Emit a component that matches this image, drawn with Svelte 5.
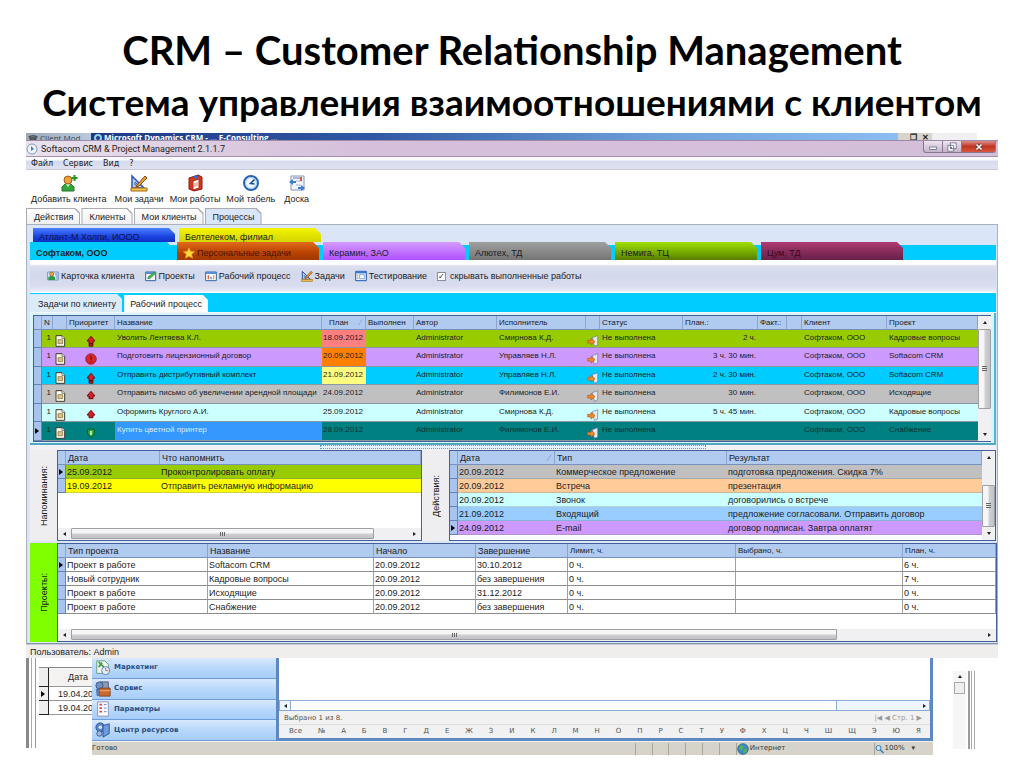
<script>
  const menu = ['Файл', 'Сервис', 'Вид', '?'];

  const tools = [
    { icon: 'user', label: 'Добавить клиента' },
    { icon: 'ruler', label: 'Мои задачи' },
    { icon: 'book', label: 'Мои работы' },
    { icon: 'clock', label: 'Мой табель' },
    { icon: 'board', label: 'Доска' }
  ];

  const pages = ['Действия', 'Клиенты', 'Мои клиенты', 'Процессы'];

  const backTabs = [
    { label: 'Атлант-М Холпи, ИООО', tone: 'blue' },
    { label: 'Белтелеком, филиал', tone: 'yellow' }
  ];
  const frontTabs = [
    { label: 'Софтаком, ООО', tone: 'cyan' },
    { label: 'Персональные задачи', tone: 'rust', star: true },
    { label: 'Керамин, ЗАО', tone: 'violet' },
    { label: 'Алютех, ТД', tone: 'gray' },
    { label: 'Немига, ТЦ', tone: 'green' },
    { label: 'Цум, ТД', tone: 'plum' }
  ];

  const actions = [
    { icon: 'card', label: 'Карточка клиента' },
    { icon: 'project', label: 'Проекты' },
    { icon: 'flow', label: 'Рабочий процесс' },
    { icon: 'ruler', label: 'Задачи' },
    { icon: 'test', label: 'Тестирование' }
  ];

  let hideDone = $state(true);

  const taskCols = [8, 11, 14, 48, 207, 44, 48, 83, 89, 14, 83, 75, 29, 15, 85, 91];
  const taskHead = ['', 'N', '', 'Приоритет', 'Название', 'План', 'Выполнен', 'Автор', 'Исполнитель', '', 'Статус', 'План.:', 'Факт.:', '', 'Клиент', 'Проект'];
  const tasks = [
    { color: '#99cc00', priority: 'up2', name: 'Уволить Лентяева К.Л.', date: '18.09.2012', dateColor: '#ff7f7f', who: 'Смирнова К.Д.', plan: '2 ч.', project: 'Кадровые вопросы' },
    { color: '#cc99ff', priority: 'stop', name: 'Подготовить лицензионный договор', date: '20.09.2012', dateColor: '#ff8000', who: 'Управляев Н.Л.', plan: '3 ч. 30 мин.', project: 'Softacom CRM' },
    { color: '#00ccff', priority: 'up2', name: 'Отправить дистрибутивный комплект', date: '21.09.2012', dateColor: '#ffff80', who: 'Управляев Н.Л.', plan: '2 ч. 30 мин.', project: 'Softacom CRM' },
    { color: '#c0c0c0', priority: 'up', name: 'Отправить письмо об увеличении арендной площади', date: '24.09.2012', who: 'Филимонов Е.И.', plan: '30 мин.', project: 'Исходящие' },
    { color: '#ccffff', priority: 'up', name: 'Оформить Круглого А.И.', date: '25.09.2012', who: 'Смирнова К.Д.', plan: '5 ч. 45 мин.', project: 'Кадровые вопросы' },
    { color: '#008080', priority: 'down', name: 'Купить цветной принтер', date: '28.09.2012', who: 'Филимонов Е.И.', plan: '', project: 'Снабжение', current: true }
  ];

  const reminders = {
    cols: [8, 94, 261],
    head: ['Дата', 'Что напомнить'],
    current: 0,
    rows: [
      { color: '#99cc00', cells: ['25.09.2012', 'Проконтролировать оплату'] },
      { color: '#ffff00', cells: ['19.09.2012', 'Отправить рекламную информацию'] }
    ]
  };
  const events = {
    cols: [8, 97, 172, 255],
    head: ['Дата', 'Тип', 'Результат'],
    sorted: 0,
    current: 4,
    rows: [
      { color: '#c0c0c0', cells: ['20.09.2012', 'Коммерческое предложение', 'подготовка предложения. Скидка 7%'] },
      { color: '#ffcc99', cells: ['20.09.2012', 'Встреча', 'презентация'] },
      { color: '#ccffff', cells: ['20.09.2012', 'Звонок', 'договорились о встрече'] },
      { color: '#99ccff', cells: ['21.09.2012', 'Входящий', 'предложение согласовали. Отправить договор'] },
      { color: '#cc99ff', cells: ['24.09.2012', 'E-mail', 'договор подписан. Завтра оплатят'] }
    ]
  };
  const projects = {
    cols: [8, 142, 166, 102, 92, 168, 167, 93],
    head: ['Тип проекта', 'Название', 'Начало', 'Завершение', 'Лимит, ч.', 'Выбрано, ч.', 'План, ч.'],
    small: 4,
    lined: true,
    current: 0,
    rows: [
      { cells: ['Проект в работе', 'Softacom CRM', '20.09.2012', '30.10.2012', '0 ч.', '', '6 ч.'] },
      { cells: ['Новый сотрудник', 'Кадровые вопросы', '20.09.2012', 'без завершения', '0 ч.', '', '7 ч.'] },
      { cells: ['Проект в работе', 'Исходящие', '20.09.2012', '31.12.2012', '0 ч.', '', '0 ч.'] },
      { cells: ['Проект в работе', 'Снабжение', '20.09.2012', 'без завершения', '0 ч.', '', '0 ч.'] }
    ]
  };

  const nav = [
    { icon: 'marketing', label: 'Маркетинг' },
    { icon: 'service', label: 'Сервис' },
    { icon: 'params', label: 'Параметры' },
    { icon: 'gears', label: 'Центр ресурсов' }
  ];
  const letters = ['Все', '№', ...'АБВГДЕЖЗИКЛМНОПРСТУФХЦЧШЩЭЮЯ'];
</script>

{#snippet icon(name)}
  <svg class="icon" viewBox="0 0 18 18" aria-hidden="true">
    {#if name === 'user'}
      <path d="M2 17v-4l3-3h6l3 3v4z" fill="#35a53a" stroke="#1c7a2a" />
      <path d="M6 10l2 3 2-3" fill="#e8f6d8" />
      <circle cx="8" cy="6" r="4" fill="#e8a33c" stroke="#9c5c14" />
      <path d="M14.500 1v6M11.500 4h6" stroke="#1e9a28" stroke-width="2" />
    {:else if name === 'ruler'}
      <path d="M2 2v12h12z" fill="#b9d4f5" stroke="#2c56b4" stroke-width="1.500" />
      <path d="M5 8v3h3z" fill="#fff" stroke="#2c56b4" />
      <path d="M7 11l8-9 2 2-8 8-3 1z" fill="#f0a028" stroke="#83461a" />
      <path d="M1 14h16v3H1z" fill="#f5c351" stroke="#a06a14" />
    {:else if name === 'book'}
      <path d="M3 4l9-3 4 2v12l-8 2-5-2z" fill="#d4361c" stroke="#8c1a10" />
      <path d="M7 7l6-2v9l-6 2z" fill="#fff" stroke="#b43020" />
      <path d="M8 9l4-1v4l-4 1z" fill="#f0b8a8" />
      <path d="M6 3l5-2v4z" fill="#346ad0" />
    {:else if name === 'clock'}
      <circle cx="9" cy="9" r="7" fill="#eef7ff" stroke="#2464b8" stroke-width="2" />
      <circle cx="9" cy="9" r="5.500" fill="none" stroke="#9cc8ee" />
      <path d="M12.500 5.500L8.500 9.500l4 .5" fill="none" stroke="#174c8a" stroke-width="1.500" />
    {:else if name === 'board'}
      <path d="M3 2h13v14H3z" fill="#f2f6ff" stroke="#8696b6" />
      <path d="M5 3h8v2H5z" fill="#a8b8d2" />
      <path d="M8 7h6M8 11h5" stroke="#a8b8d2" />
      <path d="M1 8l4-3v2h3v2H5v2zM17 14l-4 3v-2h-3v-2h3v-2z" fill="#3c7cd4" />
      <path d="M12 3h2v4h-2z" fill="#d85a44" />
    {:else if name === 'card'}
      <path d="M1 3h16v12H1z" fill="#dceafa" stroke="#4474a8" />
      <circle cx="7" cy="6" r="3" fill="#e9a94a" stroke="#85541a" />
      <path d="M2 15v-4l3-2h4l3 2v4z" fill="#2d9944" />
      <path d="M12 6h4M13 9h3M13 12h3" stroke="#2458a0" />
    {:else if name === 'project'}
      <path d="M1 3h15v13H1z" fill="#f8fcff" stroke="#3264a4" stroke-width="1.500" />
      <path d="M1 3h15v3H1z" fill="#5890d8" />
      <path d="M4 13l1-3 9-7 2 2-9 8z" fill="#53b54a" stroke="#284" />
    {:else if name === 'flow'}
      <path d="M1 3h16v13H1z" fill="#fff" stroke="#3264a4" stroke-width="1.500" />
      <path d="M1 3h16v3H1z" fill="#5890d8" />
      <path d="M4 8h2v6H4z" fill="#e05a3a" /><path d="M8 10h2v4H8z" fill="#3a8ad0" /><path d="M12 8h2v6h-2z" fill="#e8a030" />
    {:else if name === 'test'}
      <path d="M1 2h16v14H1z" fill="#e6f2ff" stroke="#2258b4" stroke-width="1.500" />
      <path d="M1 2h16v3H1z" fill="#3b78d2" />
      <path d="M7 7h7v6H7z" fill="#fff" stroke="#4c88cc" /><path d="M3 7h2v2H3zM3 11h2v2H3z" fill="#e8a030" />
    {:else if name === 'star'}
      <path d="M9 1l2.500 5.500 6 .5-4.500 4 1.500 6L9 14l-5.500 3 1.500-6L.500 7l6-.5z" fill="#ffd83a" stroke="#e89a10" />
    {:else if name === 'doc'}
      <path d="M3 1h9l4 4v12H3z" fill="#fffbe8" stroke="#3c3c34" stroke-width="1.500" />
      <path d="M6 7h7v6H6z" fill="#d9c48c" stroke="#7a6a34" /><path d="M12 1v4h4" fill="#fff" stroke="#3c3c34" />
    {:else if name === 'up' || name === 'up2'}
      <path d="M9 2l6 7h-3v4H6V9H3z" fill="#d81e28" stroke="#6b0c12" stroke-width="1.500" />
      {#if name === 'up2'}<path d="M6 13h6v4H6z" fill="#a81a20" stroke="#500" />{/if}
    {:else if name === 'down'}
      <path d="M9 16l-5-6V4l3-1h4l3 1v6z" fill="#2da83a" stroke="#0c5a24" stroke-width="1.500" /><path d="M8 6h2v6H8z" fill="#fff" />
    {:else if name === 'stop'}
      <circle cx="9" cy="9" r="8" fill="#d8262c" stroke="#8a1218" /><path d="M8 4h2v6H8zM8 12h2v2H8z" fill="#801016" />
    {:else if name === 'status'}
      <path d="M8 4l8-3v14l-5 2z" fill="#e4e8f2" stroke="#7078a0" />
      <path d="M1 8h5V5l6 5-6 5v-3H1z" fill="#f28a28" stroke="#b05a14" />
    {:else if name === 'marketing'}
      <path d="M2 1h9l4 4v10H2z" fill="#f3f8f2" stroke="#62907a" />
      <path d="M4 2l6 6M4 8l4-5" stroke="#46a04e" stroke-width="2" /><circle cx="12" cy="12" r="4.500" fill="#e2eefc" stroke="#5878a8" />
      <path d="M12 9v3h3" fill="none" stroke="#c8702c" />
    {:else if name === 'service'}
      <path d="M6 1h9v9H6z" fill="#8d9ab4" stroke="#4a5878" /><circle cx="5" cy="5" r="4" fill="#7090c4" stroke="#34568c" />
      <path d="M5 8h12v9H5z" fill="#c86a2e" stroke="#84401a" /><path d="M5 11h12" stroke="#f2b470" />
      <path d="M1 9h4v8H2z" fill="#6078a4" />
    {:else if name === 'params'}
      <path d="M3 1h12v16H3z" fill="#fdfdff" stroke="#8a8cb4" />
      <path d="M5 4h3M5 8h3M5 12h3" stroke="#d84850" stroke-width="2" /><path d="M10 4h3M10 8h3M10 12h3" stroke="#5c7cc4" />
    {:else if name === 'gears'}
      <circle cx="6" cy="6" r="5" fill="#5684c4" stroke="#294e8e" /><circle cx="6" cy="6" r="2" fill="#d6e6fa" />
      <path d="M9 4l7-2v11l-7 4z" fill="#6d9ae0" stroke="#2c4e94" /><circle cx="5" cy="13" r="3" fill="#9cb8e2" stroke="#34568c" />
    {:else if name === 'globe'}
      <circle cx="9" cy="9" r="8" fill="#3a8cc8" stroke="#1c5280" /><path d="M5 3l5 2-2 5-5 1zM10 10l5-2-1 6-4 2z" fill="#54b454" />
    {:else if name === 'lens'}
      <circle cx="7" cy="7" r="5" fill="#cfe6fb" stroke="#3878b8" stroke-width="2" /><path d="M11 11l6 6" stroke="#3878b8" stroke-width="3" />
    {/if}
  </svg>
{/snippet}

{#snippet hscroll(share, label)}
  <div class="hscroll">
    <button class="arrow left" aria-label="{label}: влево"></button>
    <div class="track"><div class="thumb" style="width: {share}%"><i></i></div></div>
    <button class="arrow right" aria-label="{label}: вправо"></button>
  </div>
{/snippet}

{#snippet vscroll(before, share, label)}
  <div class="vscroll">
    <button class="arrow up" aria-label="{label}: вверх"></button>
    <div style="flex: {before} 0 0"></div>
    <div class="thumb" style="flex: {share} 0 0"><i></i></div>
    <div style="flex: {100 - before - share} 0 0"></div>
    <button class="arrow down" aria-label="{label}: вниз"></button>
  </div>
{/snippet}

{#snippet grid(data)}
  <table class="grid" class:lined={data.lined}>
    <colgroup>
      {#each data.cols as width}<col style="width: {width}px" />{/each}
    </colgroup>
    <thead>
      <tr>
        <th></th>
        {#each data.head as title, i}
          <th class:small={data.small && i >= data.small}>{title}{#if data.sorted === i}<span class="sort">∕</span>{/if}</th>
        {/each}
      </tr>
    </thead>
    <tbody>
      {#each data.rows as row, i}
        <tr style={row.color ? `background: ${row.color}` : null}>
          <td class="mark">{#if data.current === i}<i class="pointer"></i>{/if}</td>
          {#each row.cells as cell}<td>{cell}</td>{/each}
        </tr>
      {/each}
    </tbody>
  </table>
{/snippet}

<main class="slide">
  <h1>
    <span class="latin">CRM – Customer Relationship Management</span>
    <span class="cyrillic">Система управления взаимоотношениями с клиентом</span>
  </h1>

  <div class="stage">
    <div class="behind-top">
      <div class="behind-client">☎ Client Mod...</div>
      <div class="behind-crm"><i class="ie"></i>Microsoft Dynamics CRM - ... E-Consulting ...</div>
      <div class="behind-buttons"><span>_</span><span>❐</span><span>✕</span></div>
      <div class="behind-rest"></div>
    </div>

    <section class="window">
      <header class="titlebar">
        <svg class="logo" viewBox="0 0 12 12" aria-hidden="true">
          <circle cx="6" cy="6" r="5" fill="#eef5fc" stroke="#8099c0" />
          <path d="M5 3v5l3-2z" fill="#5078b4" />
        </svg>
        <span class="caption">Softacom CRM &amp; Project Management 2.1.1.7</span>
        <div class="controls">
          <button aria-label="Свернуть">
            <svg viewBox="0 0 12 12"><rect x="2" y="6" width="8" height="3" fill="#fff" stroke="#666a88" /></svg>
          </button>
          <button aria-label="Развернуть">
            <svg viewBox="0 0 12 12"><path d="M4 1h7v7H4zM1 4h7v7H1z" fill="#fff" stroke="#666a88" /><path d="M4 6h2v2H4z" fill="#666a88" /></svg>
          </button>
          <button class="close" aria-label="Закрыть">
            <svg viewBox="0 0 12 12"><path d="M3 3l6 6M9 3l-6 6" stroke="#733" stroke-width="4" /><path d="M3 3l6 6M9 3l-6 6" stroke="#fff" stroke-width="2" /></svg>
          </button>
        </div>
      </header>

      <nav class="menu">
        {#each menu as item}<button>{item}</button>{/each}
      </nav>

      <div class="toolbar">
        {#each tools as tool}
          <button>{@render icon(tool.icon)}<span>{tool.label}</span></button>
        {/each}
      </div>

      <div class="pages">
        {#each pages as page}
          <button class:active={page === 'Процессы'}><span>{page}</span></button>
        {/each}
      </div>

      <div class="workspace">
        <div class="clients back">
          {#each backTabs as tab}<button class={tab.tone}>{tab.label}</button>{/each}
        </div>
        <div class="clients front">
          {#each frontTabs as tab}
            <button class={tab.tone}>{#if tab.star}{@render icon('star')}{/if}{tab.label}</button>
          {/each}
        </div>

        <div class="actions">
          {#each actions as action}
            <button>{@render icon(action.icon)}{action.label}</button>
          {/each}
          <label><input type="checkbox" bind:checked={hideDone} />скрывать выполненные работы</label>
        </div>

        <div class="views">
          <button class="active">Задачи по клиенту</button>
          <button>Рабочий процесс</button>
        </div>

        <div class="tasks-frame">
          <div class="tasks-box">
            <table class="tasks">
              <colgroup>
                {#each taskCols as width}<col style="width: {width}px" />{/each}
              </colgroup>
              <thead>
                <tr>
                  {#each taskHead as title, i}
                    <th class:date={i === 5}>{title}{#if i === 5}<span class="sort">∕</span>{/if}</th>
                  {/each}
                </tr>
              </thead>
              <tbody>
                {#each tasks as task}
                  <tr class:current={task.current} style="background: {task.color}">
                    <td class="mark">{#if task.current}<i class="pointer"></i>{/if}</td>
                    <td class="num">1</td>
                    <td class="pic">{@render icon('doc')}</td>
                    <td class="pic center">{@render icon(task.priority)}</td>
                    <td class="name">{task.name}</td>
                    <td class="when" style={task.dateColor ? `background: ${task.dateColor}` : null}>{task.date}</td>
                    <td></td>
                    <td>Administrator</td>
                    <td>{task.who}</td>
                    <td class="pic">{@render icon('status')}</td>
                    <td>Не выполнена</td>
                    <td class="num">{task.plan}</td>
                    <td></td>
                    <td></td>
                    <td>Софтаком, ООО</td>
                    <td>{task.project}</td>
                  </tr>
                {/each}
              </tbody>
            </table>
            {@render vscroll(0, 80, 'Задачи')}
          </div>
        </div>

        <div class="splitter"><i></i></div>

        <div class="lower">
          <div class="side"><span>Напоминания:</span></div>
          <div class="box reminders">
            {@render grid(reminders)}
            {@render hscroll(90, 'Напоминания')}
          </div>
          <div class="side"><span>Действия:</span></div>
          <div class="box events">
            <div class="fill">{@render grid(events)}</div>
            {@render vscroll(35, 65, 'Действия')}
          </div>
        </div>

        <div class="lower">
          <div class="side lime"><span>Проекты:</span></div>
          <div class="box projects">
            {@render grid(projects)}
            {@render hscroll(84, 'Проекты')}
          </div>
        </div>
      </div>

      <footer class="status">Пользователь: Admin</footer>
    </section>

    <div class="behind-bottom">
      <div class="old-client">
        <table>
          <thead><tr><th></th><th>Дата</th></tr></thead>
          <tbody>
            <tr><td><i class="pointer"></i></td><td>19.04.2012</td></tr>
            <tr><td></td><td>19.04.2012</td></tr>
          </tbody>
        </table>
      </div>

      <div class="msd">
        <div class="msd-body">
          <nav class="msd-nav">
            {#each nav as item}<a href="#top">{@render icon(item.icon)}{item.label}</a>{/each}
          </nav>
          <div class="msd-list">
            <div class="msd-blank"></div>
            <div class="msd-scroll">
              <button class="arrow left" aria-label="Список: влево"></button>
              <div class="msd-track"><div></div></div>
              <button class="arrow right" aria-label="Список: вправо"></button>
            </div>
            <div class="msd-info"><span>Выбрано 1 из 8.</span><span class="pager">|◀ ◀ Стр. 1 ▶</span></div>
            <div class="letters">
              {#each letters as letter}<a href="#top">{letter}</a>{/each}
            </div>
          </div>
        </div>
        <div class="msd-status">
          <span class="ready">Готово</span>
          <i></i><i></i><i></i><i></i><i></i><i></i>
          <span class="zone">{@render icon('globe')}Интернет</span>
          <span class="zoom">{@render icon('lens')}100%<b>▾</b></span>
        </div>
      </div>

      <div class="old-scroll">
        <button class="arrow up" aria-label="Старое окно: вверх"></button>
        <div class="knob"></div>
      </div>
      <div class="old-edge"></div>
    </div>
  </div>
</main>

<style>
  :global(body) {
    margin: 0;
    background: #fff;
  }

  .slide, .slide * {
    box-sizing: border-box;
  }

  .slide {
    padding-top: 25px;
    overflow: hidden;
    color: #1c1c24;
    font: 9px/12px "Liberation Sans", Arial, sans-serif;
  }

  h1 {
    margin: 0 0 6px;
    color: #000;
    font: 700 40px/51px Lato, "Open Sans", sans-serif;
    text-align: center;
    white-space: nowrap;
  }

  h1 span {
    display: block;
  }

  h1 .cyrillic {
    font-size: 37px;
  }

  button {
    margin: 0;
    padding: 0;
    border: 0;
    background: none;
    color: inherit;
    font: inherit;
    white-space: nowrap;
  }

  .stage {
    margin: 0 26px;
  }

  .icon {
    display: block;
    flex: none;
    width: 12px;
    height: 12px;
  }

  /* strip of the windows that lie behind */
  .behind-top {
    display: flex;
    height: 7px;
    overflow: hidden;
    font: 700 8px/10px "Open Sans", sans-serif;
    white-space: nowrap;
  }

  .behind-client {
    flex: 0 0 65px;
    padding-left: 2px;
    background: linear-gradient(90deg, #9aa8ba, #b9cade);
    color: #444;
    font-weight: 400;
  }

  .behind-crm {
    display: flex;
    flex: 1;
    gap: 2px;
    padding-left: 3px;
    background: linear-gradient(90deg, #1e3a86, #2f58a4 35%, #6ea0da 70%, #8cbcf2);
    color: #fff;
  }

  .ie {
    width: 8px;
    height: 8px;
    margin-top: 1px;
    border: 2px solid #8fd0e8;
    border-radius: 50%;
  }

  .behind-buttons {
    display: flex;
    flex: 0 0 34px;
    justify-content: space-around;
    background: #d8d4cc;
    color: #222;
    line-height: 7px;
  }

  .behind-rest {
    flex: 0 0 66px;
    background: linear-gradient(90deg, #f0f0f2 45px, #fff 45px);
  }

  /* main window */
  .titlebar {
    display: flex;
    align-items: center;
    height: 17px;
    border-top: 1px solid #9c8aa8;
    border-bottom: 1px solid #a294b0;
    background: linear-gradient(90deg, #e8e2ee, #dccbe0 20%, #d6bfdb 35%, #d4bfd9);
  }

  .logo {
    width: 12px;
    height: 12px;
  }

  .caption {
    flex: 1;
    margin-left: 3px;
    font: 9px/14px Roboto, "Open Sans", sans-serif;
  }

  .controls {
    display: flex;
    align-self: flex-start;
    height: 12px;
    margin-right: 2px;
    border: 1px solid #85788e;
    border-top: 0;
    border-radius: 0 0 3px 3px;
    background: linear-gradient(#eee4f0, #c4b4ca);
    overflow: hidden;
  }

  .controls button {
    width: 19px;
    border-right: 1px solid #85788e;
  }

  .controls .close {
    width: 33px;
    border: 0;
    background: linear-gradient(#dc9088, #c03424 50%, #d8583c);
  }

  .controls svg {
    display: block;
    width: 10px;
    height: 10px;
    margin: 0 auto;
  }

  .menu {
    display: flex;
    gap: 10px;
    height: 13px;
    padding-left: 5px;
    border-bottom: 1px solid #c8cad8;
    background: linear-gradient(#fafafd 3px, #d6daec 4px, #e0e2f2);
  }

  .menu button {
    padding-top: 1px;
    font: 8px/11px "DejaVu Sans", Verdana, sans-serif;
  }

  .toolbar {
    display: flex;
    gap: 6px;
    padding: 4px 5px 3px;
  }

  .toolbar button {
    display: flex;
    flex-direction: column;
    align-items: center;
    gap: 1px;
  }

  .toolbar .icon {
    width: 18px;
    height: 18px;
  }

  .toolbar button:first-child {
    margin-right: 2px;
  }

  .toolbar button:last-child {
    margin-left: 3px;
  }

  .pages {
    display: flex;
    gap: 1px;
    height: 16px;
    font-size: 9px;
  }

  .pages button {
    padding: 1px 1px 0;
    background: #a9abb0;
    clip-path: polygon(0 0, calc(100% - 5px) 0, 100% 5px, 100% 100%, 0 100%);
  }

  .pages span {
    display: block;
    padding: 2px 6px 0 7px;
    background: linear-gradient(#fff, #f0f0f2);
    line-height: 13px;
    clip-path: polygon(0 0, calc(100% - 5px) 0, 100% 5px, 100% 100%, 0 100%);
  }

  .pages .active span {
    background: #d9e5f8;
  }

  .workspace {
    padding: 3px 1px 1px 3px;
    border: 1px solid #a9b2bc;
    border-bottom-color: #8a94a8;
    background: #dae5f7;
  }

  .clients {
    display: flex;
    gap: 4px;
  }

  .clients button {
    display: flex;
    flex: 0 1 142px;
    align-items: center;
    gap: 2px;
    height: 18px;
    padding: 3px 6px 0;
    overflow: hidden;
    clip-path: polygon(0 0, calc(100% - 6px) 0, 100% 6px, 100% 100%, 0 100%);
  }

  .clients.back {
    padding-left: 3px;
  }

  .clients.back button {
    height: 14px;
    padding-top: 4px;
  }

  .clients.front {
    background: linear-gradient(transparent 3px, #00ccff 3px);
  }

  .clients .blue { background: linear-gradient(#4a80ff, #1c44e0 60%, #1030c8); color: #0b1450; }
  .clients .yellow { background: linear-gradient(#f4f400, #d4d400); }
  .clients .cyan { flex-basis: 143px; background: #00ccff; font-weight: 700; }
  .clients .rust { background: linear-gradient(#e06a1a, #b84200 60%, #a03800); color: #4a1400; }
  .clients .violet { background: linear-gradient(#d49cff, #b050ff); }
  .clients .gray { background: linear-gradient(#a0a0a0, #747474); }
  .clients .green { background: linear-gradient(#a0e000, #6c9c00 70%, #587c00); }
  .clients .plum { background: linear-gradient(#b03c74, #8a2c5a 50%, #66204a); color: #3c0824; }

  .actions {
    display: flex;
    align-items: center;
    gap: 10px;
    height: 33px;
    padding: 0 17px;
    border-bottom: 1px solid #fff;
    background: linear-gradient(#fff 4px, #dcdff0 6px, #d3d8eb 14px, #d8dcee 26px, #eceffa);
  }

  .actions button, .actions label {
    display: flex;
    align-items: center;
    gap: 2px;
    white-space: nowrap;
  }

  .actions input {
    appearance: none;
    width: 9px;
    height: 9px;
    margin: 0 2px 0 0;
    border: 1px solid #8c8f98;
    background: #fff;
  }

  .actions input:checked::before {
    content: "✓";
    display: block;
    color: #222;
    font: 700 8px/8px "DejaVu Sans", sans-serif;
  }

  .views {
    display: flex;
    gap: 2px;
    align-items: flex-end;
    height: 20px;
    border-bottom: 1px solid #eef8ff;
    background: #00ccff;
  }

  .views button {
    height: 17px;
    padding: 1px 6px 0;
    background: #fff;
    clip-path: polygon(0 0, calc(100% - 5px) 0, 100% 5px, 100% 100%, 0 100%);
  }

  .views .active {
    height: 18px;
    padding-left: 8px;
    background: #dcebfa;
  }

  .tasks-frame {
    padding: 2px 3px 1px;
    border-right: 2px solid #50b4d4;
    border-bottom: 2px solid #50a8c0;
    background: #d8f4fc;
  }

  .tasks-box, .box {
    display: flex;
    border: 1px solid #44609c;
    background: #fff;
  }

  table {
    border-collapse: separate;
    border-spacing: 0;
    table-layout: fixed;
  }

  th, td {
    padding: 0;
    overflow: hidden;
    font-weight: 400;
    text-align: left;
    white-space: nowrap;
  }

  .tasks {
    flex: 1;
    width: 100%;
    font-size: 8px;
    line-height: 10px;
  }

  .tasks th {
    height: 14px;
    padding-left: 2px;
    border-right: 1px solid #8ca4cc;
    border-bottom: 1px solid #7890bc;
    background: #b0caf0;
  }

  .tasks th.date {
    padding-left: 7px;
  }

  .sort {
    float: right;
    padding-right: 4px;
    color: #6c98d8;
  }

  .tasks td {
    height: 18px;
    padding: 3px 2px 0;
    border-bottom: 1px solid #8c98a0;
    vertical-align: top;
  }

  .tasks tr:nth-child(even) td {
    height: 19px;
  }

  .tasks .current {
    color: #06302f;
  }

  .tasks .current .name {
    background: #3399ff;
    color: #d8ecff;
  }

  .tasks td.num {
    text-align: right;
  }

  .tasks td.when {
    padding: 3px 0 0 1px;
  }

  .tasks td.pic {
    padding: 5px 1px 0;
  }

  .pic.center .icon {
    margin: 0 auto;
  }

  .tasks td.mark, .grid td.mark {
    padding: 0 1px;
    border-right: 1px solid #6484b8;
    border-bottom: 1px solid #6484b8;
    background: #a8c4ee;
    vertical-align: middle;
  }

  .pointer {
    display: block;
    width: 0;
    height: 0;
    border: 3px solid transparent;
    border-left: 4px solid #000;
    border-right: 0;
  }

  .splitter {
    display: flex;
    justify-content: center;
    height: 5px;
    background: #f2f2f4;
  }

  .splitter i {
    width: 40%;
    height: 4px;
    border: 1px dotted #58a0d0;
    background: #e4f4ff;
  }

  .lower {
    display: flex;
    background: #eeeef0;
  }

  .lower + .lower {
    margin-top: 2px;
  }

  .side {
    display: flex;
    flex: 0 0 27px;
    align-items: center;
    justify-content: center;
  }

  .side span {
    writing-mode: vertical-rl;
    transform: rotate(180deg);
  }

  .lime {
    background: #80ff00;
  }

  .reminders {
    flex: 364 0 0;
    flex-direction: column;
    justify-content: space-between;
  }

  .events {
    flex: 546 0 0;
    height: 91px;
  }

  .fill {
    flex: 1;
  }

  .projects {
    flex: 1;
    flex-direction: column;
    gap: 15px;
  }

  .grid {
    width: 100%;
    line-height: 12px;
  }

  .grid th {
    height: 14px;
    padding-left: 2px;
    border-right: 1px solid #8ca4cc;
    border-bottom: 1px solid #7890bc;
    background: #b0caf0;
  }

  .grid th.small {
    font-size: 8px;
  }

  .grid td {
    height: 14px;
    padding-left: 1px;
    border-bottom: 1px solid rgba(120, 130, 140, 0.35);
  }

  .lined td {
    border-right: 1px solid #a0a0a0;
    border-bottom: 1px solid #8c8c8c;
  }

  /* scroll bars */
  .hscroll {
    display: flex;
    height: 12px;
    background: #f0f0f2;
  }

  .track {
    flex: 1;
  }

  .thumb {
    display: flex;
    align-items: center;
    justify-content: center;
    border: 1px solid #a0a0a4;
    border-radius: 1px;
  }

  .hscroll .thumb {
    height: 11px;
    background: linear-gradient(#f6f6f6 45%, #d0d0d4 55%, #c2c2c6);
  }

  .hscroll .thumb i {
    width: 5px;
    height: 4px;
    background: repeating-linear-gradient(90deg, #666 0 1px, transparent 1px 2px);
  }

  .vscroll {
    display: flex;
    flex: 0 0 13px;
    flex-direction: column;
    background: #f0f0f2;
  }

  .vscroll .thumb {
    background: linear-gradient(90deg, #f6f6f6 45%, #d0d0d4 55%, #c2c2c6);
  }

  .vscroll .thumb i {
    width: 5px;
    height: 6px;
    background: repeating-linear-gradient(#666 0 1px, transparent 1px 2px);
  }

  .arrow {
    display: flex;
    flex: 0 0 13px;
    align-items: center;
    justify-content: center;
  }

  .arrow::before {
    content: "";
    border: 2px solid transparent;
  }

  .arrow.left::before { border-right: 3px solid #222; border-left: 0; }
  .arrow.right::before { border-left: 3px solid #222; border-right: 0; }
  .arrow.up::before { border-bottom: 3px solid #222; border-top: 0; }
  .arrow.down::before { border-top: 3px solid #222; border-bottom: 0; }

  .status {
    height: 14px;
    padding: 1px 4px 0;
    border-top: 1px solid #c8ccd4;
    background: #f0eeec;
  }

  /* windows below */
  .behind-bottom {
    display: flex;
    align-items: flex-start;
  }

  .old-client {
    flex: 0 0 66px;
    height: 90px;
    padding: 9px 0 0 13px;
    overflow: hidden;
    background: linear-gradient(90deg, #888 3px, #fff 3px 5px, #aaa 5px 6px, #fff 6px 9px, #999 9px 10px, transparent 10px);
  }

  .old-client table {
    width: 68px;
    border-top: 1px solid #888;
    background: #fff;
  }

  .old-client th, .old-client td {
    height: 14px;
    border-bottom: 1px solid #999;
  }

  .old-client th {
    height: 19px;
    background: #f4f3f1;
    text-align: center;
  }

  .old-client td {
    padding-left: 9px;
  }

  .old-client th:first-child, .old-client td:first-child {
    width: 10px;
    padding-left: 2px;
    border-right: 1px solid #222;
    border-bottom-color: #222;
    background: #f0eeec;
  }

  .msd {
    flex: 1;
    font: 7px/11px "DejaVu Sans", Verdana, sans-serif;
  }

  .msd-body {
    display: flex;
    height: 83px;
    border-right: 3px solid #5c88c4;
  }

  .msd-nav {
    display: flex;
    flex: 0 0 187px;
    flex-direction: column;
    border-right: 3px solid #5c88c4;
  }

  .msd-nav a {
    display: flex;
    flex: 1;
    align-items: center;
    gap: 3px;
    padding-left: 3px;
    border-bottom: 1px solid #6f9cd8;
    background: linear-gradient(#d8e9fd, #b9d8fb 50%, #a6cdfa);
    color: #294e82;
    font-weight: 700;
    text-decoration: none;
  }

  .msd-nav .icon {
    width: 16px;
    height: 16px;
  }

  .msd-list {
    display: flex;
    flex: 1;
    flex-direction: column;
    border-bottom: 3px solid #5c88c4;
    background: #f1f1f1;
    color: #555;
  }

  .msd-blank {
    flex: 1;
    background: #fff;
  }

  .msd-scroll {
    display: flex;
    height: 11px;
    border: 1px solid #8cacd8;
    background: #eef5ff;
  }

  .msd-scroll .arrow {
    flex-basis: 10px;
  }

  .msd-track {
    flex: 1;
  }

  .msd-track div {
    width: 87%;
    height: 9px;
    border: 1px solid #8cacd8;
    border-width: 0 1px;
    background: #fff;
  }

  .msd-info {
    display: flex;
    justify-content: space-between;
    height: 14px;
    padding: 2px 8px 0 5px;
    border-bottom: 1px solid #ddd;
  }

  .pager {
    color: #999;
  }

  .letters {
    display: flex;
    justify-content: space-between;
    height: 13px;
    padding: 1px 9px 0 10px;
  }

  .letters a {
    color: #555;
    text-decoration: none;
  }

  .msd-status {
    display: flex;
    align-items: center;
    height: 14px;
    border-top: 1px solid #f4f2ee;
    background: #d6d3ca;
    color: #333;
  }

  .ready {
    flex: 548 0 0;
  }

  .msd-status i {
    flex: 16 0 0;
    height: 12px;
    border-left: 1px solid #aaa69c;
  }

  .zone, .zoom {
    display: flex;
    align-items: center;
    gap: 1px;
  }

  .zone {
    flex: 138 0 0;
    border-left: 1px solid #aaa69c;
  }

  .zoom {
    flex: 59 0 0;
    border-left: 1px solid #aaa69c;
  }

  .zoom .icon {
    width: 9px;
  }

  .zoom b {
    margin-left: 6px;
  }

  .old-scroll {
    flex: 0 0 13px;
    height: 78px;
    margin: 13px 2px 0 20px;
    background: #f6f6f6;
  }

  .old-scroll .arrow {
    width: 13px;
    height: 11px;
  }

  .knob {
    height: 12px;
    margin: 0 1px;
    border: 1px solid #aaa;
    background: #eee;
  }

  .old-edge {
    flex: 0 0 30px;
    height: 78px;
    margin-top: 13px;
    background: linear-gradient(90deg, #999 2px, #fff 2px 3px, #aaa 3px 4px, #fff 4px 6px, #aaa 6px 7px, #fff 7px);
  }
</style>
